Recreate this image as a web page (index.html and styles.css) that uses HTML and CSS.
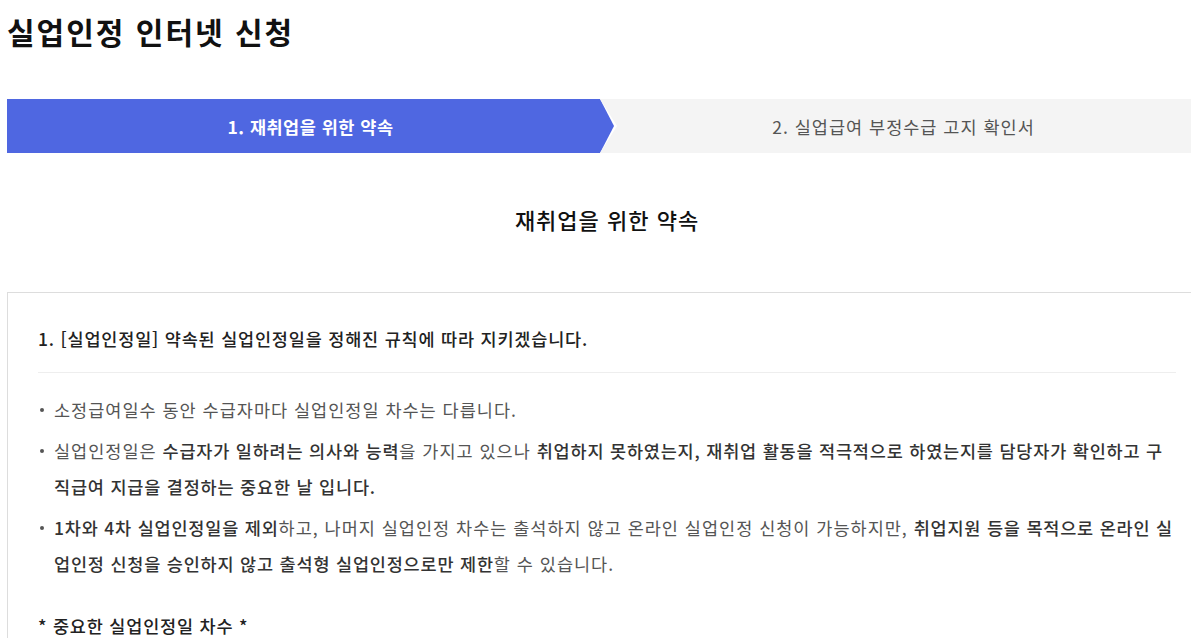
FILE: index.html
```html
<!DOCTYPE html>
<html lang="ko">
<head>
<meta charset="utf-8">
<title>실업인정 인터넷 신청</title>
<link rel="stylesheet" href="styles.css">
</head>
<body>
<div class="page">
  <h1 class="page-title">실업인정 인터넷 신청</h1>

  <div class="steps">
    <div class="step step-active"><div class="step-inner">1. 재취업을 위한 약속</div></div>
    <div class="step step-next">2. 실업급여 부정수급 고지 확인서</div>
  </div>

  <h2 class="section-title">재취업을 위한 약속</h2>

  <div class="box">
    <h3 class="item-title">1. [실업인정일] 약속된 실업인정일을 정해진 규칙에 따라 지키겠습니다.</h3>
    <ul class="bullets">
      <li>소정급여일수 동안 수급자마다 실업인정일 차수는 다릅니다.</li>
      <li>실업인정일은 <b>수급자가 일하려는 의사와 능력</b>을 가지고 있으나 <b>취업하지 못하였는지, 재취업 활동을 적극적으로 하였는지를 담당자가 확인하고 구직급여 지급을 결정하는 중요한 날 입니다.</b></li>
      <li><b>1차와 4차 실업인정일을 제외</b>하고, 나머지 실업인정 차수는 출석하지 않고 온라인 실업인정 신청이 가능하지만, <b>취업지원 등을 목적으로 온라인 실업인정 신청을 승인하지 않고 출석형 실업인정으로만 제한</b>할 수 있습니다.</li>
    </ul>
    <p class="sub-title">* 중요한 실업인정일 차수 *</p>
  </div>
</div>
</body>
</html>
```
FILE: styles.css
```css
html, body {
  margin: 0;
  padding: 0;
  background: #fff;
  overflow-x: hidden;
}
body {
  font-family: "Noto Sans CJK KR", "Noto Sans", sans-serif;
  color: #333;
}
.page {
  width: 1200px;
  margin-left: 7px;
}
.page-title {
  margin: 0;
  padding-top: 8px;
  font-size: 30px;
  line-height: 46px;
  font-weight: 700;
  letter-spacing: 2px;
  color: #111;
}
.steps {
  display: flex;
  height: 54px;
  margin-top: 45px;
  background: #f4f4f4;
}
.step {
  display: flex;
  align-items: center;
  justify-content: center;
  font-size: 17.5px;
}
.step-active {
  width: 610px;
  margin-right: -17px;
  background: #fff;
  clip-path: polygon(0 0, calc(100% - 17px) 0, 100% 50%, calc(100% - 17px) 100%, 0 100%);
  position: relative;
  z-index: 1;
}
.step-inner {
  width: 607px;
  align-self: stretch;
  margin-right: 3px;
  display: flex;
  align-items: center;
  justify-content: center;
  background: #4f67e1;
  color: #fff;
  font-weight: 700;
  letter-spacing: 0.5px;
  clip-path: polygon(0 0, calc(100% - 14px) 0, 100% 50%, calc(100% - 14px) 100%, 0 100%);
}
.step-next {
  flex: 1;
  color: #555;
  font-weight: 400;
  letter-spacing: 1px;
}
.section-title {
  margin: 0;
  padding: 48px 0 55px;
  text-align: center;
  font-size: 22px;
  line-height: 36px;
  font-weight: 500;
  letter-spacing: 1px;
  color: #111;
}
.box {
  border: 1px solid #ddd;
  padding: 28px 30px 30px;
}
.item-title {
  margin: 0;
  padding-bottom: 15px;
  border-bottom: 1px solid #eee;
  font-size: 17.5px;
  line-height: 36px;
  font-weight: 500;
  letter-spacing: 0.8px;
  color: #222;
}
.bullets {
  list-style: none;
  margin: 19px 0 0;
  padding: 0;
}
.bullets li {
  position: relative;
  padding-left: 16px;
  margin-bottom: 5px;
  font-size: 17.5px;
  line-height: 36px;
  letter-spacing: 1px;
  color: #555;
}
.bullets li::before {
  content: "";
  position: absolute;
  left: 2px;
  top: 16px;
  width: 4px;
  height: 4px;
  border-radius: 50%;
  background: #555;
}
.bullets b {
  font-weight: 500;
  letter-spacing: 0.8px;
  color: #333;
}
.sub-title {
  margin: 26px 0 0;
  font-size: 17.5px;
  line-height: 36px;
  font-weight: 500;
  letter-spacing: 0.8px;
  color: #222;
}
```
